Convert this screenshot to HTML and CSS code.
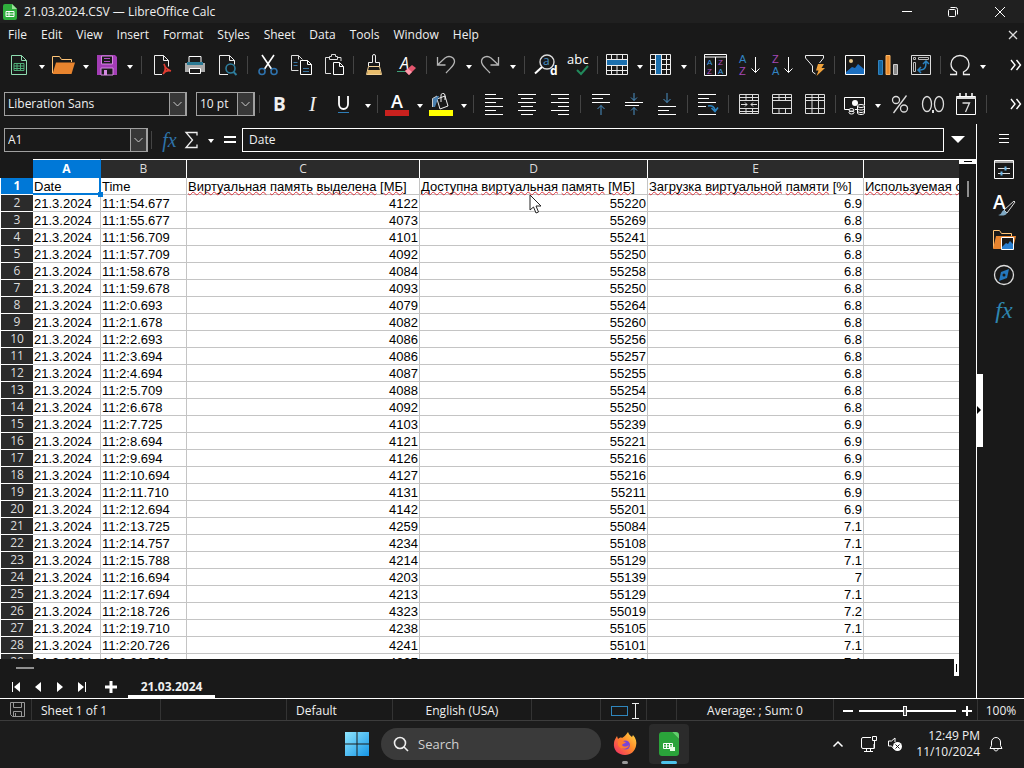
FILE: index.html
```html
<!DOCTYPE html>
<html lang="en">
<head>
    <meta charset="UTF-8">
    <meta name="viewport" content="width=device-width, initial-scale=1.0">
    <title>21.03.2024.CSV — LibreOffice Calc</title>
    <link rel="stylesheet" href="styles.css">
</head>
<body>
    <header class="titlebar">
        <svg class="app-icon" width="16" height="18" viewBox="0 0 16 18"><path d="M3 1h7l5 5v9a2 2 0 0 1-2 2H3a2 2 0 0 1-2-2V3a2 2 0 0 1 2-2z" fill="#2fae3c"/><path d="M10 1l5 5h-5z" fill="#9be29a"/><path d="M4 8.5h8v5H4zM4 11h8M7 8.5v5" stroke="#fff" fill="none"/></svg>
        <span class="title-text">21.03.2024.CSV — LibreOffice Calc</span>
        <div class="window-buttons">
            <button aria-label="Minimize"><svg width="12" height="12" viewBox="0 0 12 12"><path d="M1 5.500h10" stroke="#fff"/></svg></button>
            <button aria-label="Restore"><svg width="12" height="12" viewBox="0 0 12 12" fill="none" stroke="#fff"><rect x="1.500" y="3.500" width="7" height="7" rx="1"/><path d="M3.500 1.500h5a2 2 0 0 1 2 2v5"/></svg></button>
            <button aria-label="Close"><svg width="12" height="12" viewBox="0 0 12 12"><path d="M1 1l10 10M11 1L1 11" stroke="#fff"/></svg></button>
        </div>
    </header>

    <nav class="menubar">
        <button>File</button>
        <button>Edit</button>
        <button>View</button>
        <button>Insert</button>
        <button>Format</button>
        <button>Styles</button>
        <button>Sheet</button>
        <button>Data</button>
        <button>Tools</button>
        <button>Window</button>
        <button>Help</button>
        <button class="close-doc" aria-label="Close document"><svg width="10" height="10" viewBox="0 0 10 10"><path d="M1 1l8 8M9 1L1 9" stroke="#ddd" stroke-width="1.300"/></svg></button>
    </nav>

    <!-- Standard toolbar -->
    <div class="toolbar toolbar-standard">
        <button class="tool split" aria-label="New"><svg class="icon" viewBox="0 0 24 24" fill="none"><path d="M4.500 2.500h10l5 5v14h-15zM14.500 2.500v5h5" stroke="#8fdcb0"/><path d="M7 10.500h10v7H7zM7 13h10M7 15.500h10M10 10.500v7M13.500 10.500v7" stroke="#4fae78"/></svg></button>
        <button class="tool split" aria-label="Open"><svg class="icon" viewBox="0 0 24 24"><path d="M1.500 20V3.500h7l2 3h10V9" fill="none" stroke="#ffc477"/><path d="M5 9.500h19L20.500 21H1.500z" fill="#e8842e"/></svg></button>
        <button class="tool split" aria-label="Save"><svg class="icon" viewBox="0 0 24 24"><path d="M2 2h18l2 2v18H2z" fill="#a33db5"/><path d="M6.500 3v8h11V3z" fill="#1a1a1a" stroke="#d68be2"/><path d="M9 5.500h6M9 8.500h6" stroke="#b04cc1"/><path d="M6 22v-7h12v7z" fill="#1a1a1a" stroke="#d68be2"/><path d="M9 17h3v5H9z" fill="#d68be2"/></svg></button>
        <span class="sep"></span>
        <button class="tool" aria-label="Export as PDF"><svg class="icon" viewBox="0 0 24 24" fill="none"><path d="M12 21.500H4.500v-19h9l5 5v6M13.500 2.500v5h5" stroke="#eee"/><path d="M14 11c1 4 4 6 7 7-3-1-6 0-8 3 2-2 3-6 1-10z" stroke="#e03c31" stroke-width="1.600"/></svg></button>
        <button class="tool" aria-label="Print"><svg class="icon" viewBox="0 0 24 24"><path d="M6 9V3.500h12V9" fill="#1a1a1a" stroke="#fff"/><path d="M2 10h20v9H2z" fill="#aaa"/><path d="M4 9h16v3H4z" fill="#2b7a94"/><path d="M6.500 15.500h11v5h-11z" fill="#1a1a1a" stroke="#fff"/></svg></button>
        <button class="tool" aria-label="Print preview"><svg class="icon" viewBox="0 0 24 24" fill="none"><path d="M12 21.500H3.500v-19h10l5 5v4M13.500 2.500v5h5" stroke="#eee"/><circle cx="14.500" cy="15.500" r="4.500" stroke="#2e7e9e" stroke-width="1.600"/><path d="M17.500 19l3 3" stroke="#2e7e9e" stroke-width="2"/></svg></button>
        <span class="sep"></span>
        <button class="tool" aria-label="Cut"><svg class="icon" viewBox="0 0 24 24" fill="none"><path d="M6 2l9.500 14M18 2L8.500 16" stroke="#fff" stroke-width="1.600"/><circle cx="6" cy="18.500" r="3" stroke="#2e72ad" stroke-width="1.600"/><circle cx="18" cy="18.500" r="3" stroke="#2e72ad" stroke-width="1.600"/></svg></button>
        <button class="tool" aria-label="Copy"><svg class="icon" viewBox="0 0 24 24" fill="none"><path d="M9.500 17.500h-7v-15h7l4 4M9.500 2.500v4" stroke="#ddd"/><path d="M11.500 7.500h7l4 4v10h-11zM18.500 7.500v4h4" stroke="#fff"/><path d="M4.500 9.500h4M4.500 12.500h4M14 15.500h6M14 18.500h6" stroke="#3b78a5"/></svg></button>
        <button class="tool" aria-label="Paste"><svg class="icon" viewBox="0 0 24 24" fill="none"><path d="M9 20.500H3.500v-16h4M15 4.500h4V8M7.500 3.500h2v-2h4v2h2v3h-8z" stroke="#ddd"/><path d="M11.500 9.500h6l4 4v8h-10zM17.500 9.500v4h4" stroke="#fff"/></svg></button>
        <span class="sep"></span>
        <button class="tool" aria-label="Clone formatting"><svg class="icon" viewBox="0 0 24 24" fill="none"><path d="M10.500 9.500V3a1.500 1.500 0 0 1 3 0v6.500h4v4h-11v-4z" stroke="#eee"/><path d="M6.500 13.500l-2 8h15l-2-8z" stroke="#f3d196" fill="#1a1a1a"/><path d="M6 17h12l1 4H5z" fill="#e9bd6c"/></svg></button>
        <button class="tool" aria-label="Clear formatting"><svg class="icon" viewBox="0 0 24 24"><text x="5" y="16" class="glyph" font-size="16" font-style="italic" fill="#fff">A</text><path d="M2 18.500h9" stroke="#3fa37a"/><path d="M10 18l7-6 4 3-7 7z" fill="#e4566e"/><path d="M10 18l3-2.500 4 3.500-3 3z" fill="#ff9aab"/></svg></button>
        <span class="sep"></span>
        <button class="tool split" aria-label="Undo"><svg class="icon" viewBox="0 0 24 24" fill="none" stroke="#b5b5b5" stroke-width="1.300"><path d="M3.500 4v8h8M4 11.500l7-6.500c4-3 9-1 9.500 3 .5 4-3 6-8.500 12"/></svg></button>
        <button class="tool split" aria-label="Redo"><svg class="icon" viewBox="0 0 24 24" fill="none" stroke="#b5b5b5" stroke-width="1.300"><path d="M20.500 4v8h-8M20 11.500L13 5C9 2 4 4 3.500 8c-.5 4 3 6 8.500 12"/></svg></button>
        <span class="sep"></span>
        <button class="tool" aria-label="Find and replace"><svg class="icon" viewBox="0 0 24 24" fill="none"><circle cx="14" cy="9" r="7" stroke="#ddd" stroke-width="1.400"/><path d="M9 14l-7 6.500" stroke="#fff" stroke-width="2"/><text x="10" y="12" class="glyph" font-size="12" fill="#4a90c4">a</text><text x="17" y="22" class="glyph" font-size="12" font-weight="bold" fill="#fff">d</text></svg></button>
        <button class="tool" aria-label="Spelling"><svg class="icon" viewBox="0 0 24 24" fill="none"><text x="1" y="11" class="glyph" font-size="13" fill="#fff">abc</text><path d="M11 17l4 4 7-8" stroke="#218a5c" stroke-width="2"/></svg></button>
        <span class="sep"></span>
        <button class="tool split" aria-label="Row"><svg class="icon" viewBox="0 0 24 24" fill="none"><path d="M2 7h20v5H2z" fill="#1b6fae"/><path d="M1.500 1.500h21v20h-21zM1.500 6.500h21M1.500 12.500h21M1.500 17.500h21M6.500 1.500v5M12 1.500v5M17.500 1.500v5M6.500 12v10M12 12v10M17.500 12v10" stroke="#eee"/></svg></button>
        <button class="tool split" aria-label="Column"><svg class="icon" viewBox="0 0 24 24" fill="none"><path d="M7 2h6v20H7z" fill="#1b6fae"/><path d="M1.500 1.500h20v20h-20zM6.500 1.500v20M12.500 1.500v20M17.500 1.500v20M1.500 6.500h5M1.500 11.500h5M1.500 16.500h5M12 6.500h9M12 11.500h9M12 16.500h9" stroke="#eee"/></svg></button>
        <span class="sep"></span>
        <button class="tool" aria-label="Sort"><svg class="icon" viewBox="0 0 24 24" fill="none"><path d="M.5 1.500h22v21H.5zM.5 4h22M11.500 4v18" stroke="#fff"/><g class="letters" font-size="8"><text x="3" y="12" fill="#3b9be0">A</text><text x="3" y="21" fill="#b04cc1">Z</text><text x="14" y="12" fill="#b04cc1">Z</text><text x="14" y="21" fill="#3b9be0">A</text></g></svg></button>
        <button class="tool" aria-label="Sort ascending"><svg class="icon" viewBox="0 0 24 24" fill="none"><g class="letters" font-size="11"><text x="2" y="10" fill="#3184c4">A</text><text x="2" y="22" fill="#a548b5">Z</text></g><path d="M18.500 4v15.500M14.500 15.500l4 4 4-4" stroke="#fff"/></svg></button>
        <button class="tool" aria-label="Sort descending"><svg class="icon" viewBox="0 0 24 24" fill="none"><g class="letters" font-size="11"><text x="2" y="10" fill="#a548b5">Z</text><text x="2" y="22" fill="#3184c4">A</text></g><path d="M18.500 4v15.500M14.500 15.500l4 4 4-4" stroke="#fff"/></svg></button>
        <button class="tool" aria-label="AutoFilter"><svg class="icon" viewBox="0 0 24 24" fill="none"><path d="M12.500 21l-3-2v-6l-7-8V2.500h18V5l-4 5" stroke="#eee"/><path d="M15 11h6l-2.500 4H22l-8.500 8 2-5.500H13z" fill="#f0a23b"/></svg></button>
        <span class="sep"></span>
        <button class="tool" aria-label="Image"><svg class="icon" viewBox="0 0 24 24"><path d="M2.500 2.500h19v19h-19z" fill="none" stroke="#fff"/><circle cx="8" cy="8" r="2" fill="#e8c88a"/><path d="M3 19l6-5 3 1 3-4 6 5v5H3z" fill="#1c6fc0"/></svg></button>
        <button class="tool" aria-label="Chart"><svg class="icon" viewBox="0 0 24 24"><path d="M2.500 7.500h4v14h-4z" fill="#15659f" stroke="#2f83c0"/><path d="M10 2.500h4v19h-4z" fill="#e88b2e" stroke="#ffb765"/><path d="M17.500 11.500h4v10h-4z" fill="#8a8a8a" stroke="#ccc"/></svg></button>
        <button class="tool" aria-label="Pivot table"><svg class="icon" viewBox="0 0 24 24" fill="none"><path d="M2.500 2.500h19v19h-19z" stroke="#ddd"/><path d="M4.500 4.500h2v2h-2zM9.500 4.500h10v2h-10zM4.500 9.500h2v9h-2z" stroke="#bbb"/><path d="M9 17c7 0 8-2 8-8M14 11l3-3 3 3M12 14l-3 3 3 3" stroke="#2b82bf" stroke-width="1.500"/></svg></button>
        <span class="sep"></span>
        <button class="tool split" aria-label="Special character"><svg class="icon" viewBox="0 0 24 24" fill="none"><path d="M2 21.500h6.500v-2.500C4.500 17 3 14 3 11a9 8.500 0 0 1 18 0c0 3-1.500 6-5.500 8v2.500H22" stroke="#eee" stroke-width="1.300"/></svg></button>
        <button class="more" aria-label="More">
            <svg width="12" height="12" viewBox="0 0 12 12" fill="none" stroke="#fff" stroke-width="1.400"><path d="M1 1l4 5-4 5M6.500 1l4 5-4 5"/></svg>
        </button>
    </div>

    <!-- Formatting toolbar -->
    <div class="toolbar toolbar-format">
        <select class="combo combo-font" aria-label="Font name"><option>Liberation Sans</option></select>
        <select class="combo combo-size" aria-label="Font size"><option>10 pt</option></select>
        <span class="sep"></span>
        <button class="tool letter bold" aria-label="Bold">B</button>
        <button class="tool letter italic" aria-label="Italic">I</button>
        <button class="tool split" aria-label="Underline"><svg class="icon" viewBox="0 0 24 24" fill="none"><path d="M6 4v8a4.500 5 0 0 0 9 0V4" stroke="#fff" stroke-width="1.800"/><path d="M5 20.500h11" stroke="#2e7eb8"/></svg></button>
        <span class="sep"></span>
        <button class="tool split" aria-label="Font color"><svg class="icon" viewBox="0 0 24 24"><text x="12" y="16" text-anchor="middle" class="glyph" font-size="18" font-weight="600" fill="#fff">A</text><path d="M0 18h24v6H0z" fill="#c9211e"/></svg></button>
        <button class="tool split" aria-label="Background color"><svg class="icon" viewBox="0 0 24 24" fill="none"><path d="M8 7l8-3 3 10-8 3zM12 10V4a2 2 0 0 1 4-1v5" stroke="#eee"/><path d="M3 15V7l5-3h2L6 15z" fill="#4a7fae"/><path d="M3.500 15V6.500L8 4" stroke="#ccc"/><path d="M0 18h24v6H0z" fill="#ff0"/></svg></button>
        <span class="sep"></span>
        <button class="tool" aria-label="Align left"><svg class="icon" viewBox="0 0 24 24"><path d="M3 2.500h11M3 6.500h18M3 10.500h11M3 14.500h18M3 18.500h11M3 22.500h18" stroke="#fff"/></svg></button>
        <button class="tool" aria-label="Center"><svg class="icon" viewBox="0 0 24 24"><path d="M3 2.500h18M6 6.500h12M3 10.500h18M6 14.500h12M3 18.500h18M6 22.500h12" stroke="#fff"/></svg></button>
        <button class="tool" aria-label="Align right"><svg class="icon" viewBox="0 0 24 24"><path d="M3 2.500h18M10 6.500h11M3 10.500h18M10 14.500h11M3 18.500h18M10 22.500h11" stroke="#fff"/></svg></button>
        <span class="sep"></span>
        <button class="tool" aria-label="Align top"><svg class="icon" viewBox="0 0 24 24" fill="none"><path d="M3 2.500h18M3 6.500h11M3 10.500h18" stroke="#fff"/><path d="M12 23V13.500M8.500 17l3.500-3.500 3.500 3.500" stroke="#4a90c4"/></svg></button>
        <button class="tool" aria-label="Center vertically"><svg class="icon" viewBox="0 0 24 24" fill="none"><path d="M3 10.500h18M3 13.500h14" stroke="#fff"/><path d="M12 1v7.500M9 5.500l3 3 3-3M12 23v-7.500M9 18.500l3-3 3 3" stroke="#4a90c4"/></svg></button>
        <button class="tool" aria-label="Align bottom"><svg class="icon" viewBox="0 0 24 24" fill="none"><path d="M3 14.500h18M3 18.500h11M3 22.500h18" stroke="#fff"/><path d="M12 1v9.500M8.500 7l3.500 3.500L15.500 7" stroke="#4a90c4"/></svg></button>
        <span class="sep"></span>
        <button class="tool" aria-label="Wrap text"><svg class="icon" viewBox="0 0 24 24" fill="none"><path d="M2 2.500h18M2 6.500h11M2 10.500h18M2 14.500h8M2 22.500h18" stroke="#fff"/><path d="M12 14c4-1 7 1 7 5M15.500 16l3.500 3.500 3-4" stroke="#2b82bf" stroke-width="1.600"/></svg></button>
        <span class="sep"></span>
        <button class="tool" aria-label="Merge and center"><svg class="icon" viewBox="0 0 24 24" fill="none" stroke="#ddd"><path d="M2.500 2.500h19v19h-19zM2.500 5.500h19M2.500 8.500h19M2.500 16.500h19M2.500 19.500h19M9 2.500v6M15.500 2.500v6M9 16.500v5M15.500 16.500v5M4 12.500h6M14 12.500h6M8 10.500l2 2-2 2M16 10.500l-2 2 2 2"/></svg></button>
        <button class="tool" aria-label="Merge cells"><svg class="icon" viewBox="0 0 24 24" fill="none" stroke="#ddd"><path d="M2.500 2.500h19v19h-19zM2.500 5.500h19M2.500 8.500h19M2.500 16.500h19M9 2.500v6M15.500 2.500v6M9 16.500v5M15.500 16.500v5"/></svg></button>
        <button class="tool" aria-label="Unmerge cells"><svg class="icon" viewBox="0 0 24 24" fill="none" stroke="#ddd"><path d="M2.500 2.500h19v19h-19zM2.500 5.500h19M2.500 8.500h19M2.500 16.500h19M9 2.500v19M15.500 2.500v19"/></svg></button>
        <span class="sep"></span>
        <button class="tool split" aria-label="Currency"><svg class="icon" viewBox="0 0 24 24"><path d="M1.500 5.500h20v12h-20z" fill="none" stroke="#fff"/><circle cx="12" cy="11" r="3" fill="#fff"/><path d="M6 15h6v7H6zM14 13h8v9h-8z" fill="#1a1a1a"/><g fill="none" stroke="#fff"><ellipse cx="8.500" cy="18" rx="2.500" ry="1.500"/><ellipse cx="8.500" cy="20.500" rx="2.500" ry="1.500"/><ellipse cx="18" cy="14" rx="3.500" ry="1.500"/><path d="M14.500 14v7c0 2 7 2 7 0v-7M14.500 16.500c0 2 7 2 7 0M14.500 19c0 2 7 2 7 0"/></g></svg></button>
        <button class="tool" aria-label="Percent"><svg class="icon" viewBox="0 0 24 24" fill="none" stroke="#ddd" stroke-width="1.300"><circle cx="8" cy="8" r="3.500"/><circle cx="16" cy="16.500" r="3.500"/><path d="M18.500 3.500L5.500 21"/></svg></button>
        <button class="tool" aria-label="Number"><svg class="icon" viewBox="0 0 24 24" fill="none" stroke="#ddd" stroke-width="1.300"><ellipse cx="6" cy="12" rx="4.500" ry="7.500"/><ellipse cx="18" cy="12" rx="4.500" ry="7.500"/><path d="M12 18v3" stroke-width="2"/></svg></button>
        <button class="tool" aria-label="Date"><svg class="icon" viewBox="0 0 24 24" fill="none"><path d="M2.500 4.500h19v18h-19z" stroke="#fff"/><path d="M2 6h20" stroke="#ddd" stroke-width="2"/><path d="M6 1v4M12 1v4M18 1v4" stroke="#fff" stroke-width="1.500"/><path d="M8.500 11h7l-4 9" stroke="#ddd" stroke-width="1.300"/></svg></button>
        <span class="sep"></span>
        <button class="more" aria-label="More">
            <svg width="12" height="12" viewBox="0 0 12 12" fill="none" stroke="#fff" stroke-width="1.400"><path d="M1 1l4 5-4 5M6.500 1l4 5-4 5"/></svg>
        </button>
    </div>

    <main class="workspace">
        <section class="document">
            <div class="formula-bar">
                <select class="combo combo-name" aria-label="Name box"><option>A1</option></select>
                <span class="sep"></span>
                <button class="fx" aria-label="Function wizard">fx</button>
                <button class="sum" aria-label="Select function"><svg width="16" height="18" viewBox="0 0 16 18" fill="none"><path d="M13 4.500V1.500H2l6.500 7.500L2 16.500h11v-3" stroke="#eee" stroke-width="1.300"/></svg></button>
                <button class="equals" aria-label="Formula"><svg width="14" height="10" viewBox="0 0 14 10"><path d="M1 2h12M1 7h12" stroke="#fff" stroke-width="2"/></svg></button>
                <input class="formula-input" type="text" value="Date" aria-label="Input line">
                <button class="expand" aria-label="Expand formula bar"><svg width="14" height="8" viewBox="0 0 14 8"><path d="M0 0h14L7 7z" fill="#fff"/></svg></button>
            </div>

            <div class="sheet-area">
                <div class="sheet">
                    <table class="grid">
                        <colgroup>
                            <col class="col-head"><col class="col-a"><col class="col-b"><col class="col-c"><col class="col-d"><col class="col-e"><col>
                        </colgroup>
                        <thead>
                            <tr><td class="corner"></td><th class="current">A</th><th>B</th><th>C</th><th>D</th><th>E</th><th></th></tr>
                        </thead>
                        <tbody id="rows">
                            <tr class="labels">
                                <th class="current">1</th>
                                <td class="cursor-cell">Date</td>
                                <td>Time</td>
                                <td><u>Виртуальная</u> <u>память</u> <u>выделена</u> [<u>МБ</u>]</td>
                                <td><u>Доступна</u> <u>виртуальная</u> <u>память</u> [<u>МБ</u>]</td>
                                <td><u>Загрузка</u> <u>виртуальной</u> <u>памяти</u> [%]</td>
                                <td><u>Используемая</u> <u>оп</u></td>
                            </tr>
                        </tbody>
                    </table>
                    <svg class="pointer" width="13" height="20" viewBox="0 0 13 20"><path d="M1 1v15l3.500-3 2.500 6 2.500-1-2.500-6H12z" fill="#fff" stroke="#222"/></svg>
                </div>
                <div class="vscroll"><span class="split-handle"></span><span class="thumb"></span></div>
            </div>

            <div class="hscroll"><span class="thumb"></span><span class="split-handle"></span></div>

            <div class="sheet-tabs">
                <button aria-label="First sheet"><svg width="10" height="12" viewBox="0 0 10 12"><path d="M1.500 1v10" stroke="#fff"/><path d="M9 1v10L3 6z" fill="#fff"/></svg></button>
                <button aria-label="Previous sheet"><svg width="10" height="12" viewBox="0 0 10 12"><path d="M8 1v10L2 6z" fill="#fff"/></svg></button>
                <button aria-label="Next sheet"><svg width="10" height="12" viewBox="0 0 10 12"><path d="M2 1v10l6-5z" fill="#fff"/></svg></button>
                <button aria-label="Last sheet"><svg width="10" height="12" viewBox="0 0 10 12"><path d="M8.500 1v10" stroke="#fff"/><path d="M1 1v10l6-5z" fill="#fff"/></svg></button>
                <button class="add-sheet" aria-label="Add sheet"><svg width="14" height="14" viewBox="0 0 14 14"><path d="M7 1v12M1 7h12" stroke="#fff" stroke-width="3"/></svg></button>
                <button class="tab">21.03.2024</button>
            </div>
        </section>

        <aside class="sidebar">
            <span class="sidebar-handle"></span>
            <button aria-label="Sidebar settings"><svg class="icon" viewBox="0 0 24 24"><path d="M7 8.500h10M7 12.500h10M7 16.500h10" stroke="#fff"/></svg></button>
            <button aria-label="Properties"><svg class="icon" viewBox="0 0 24 24" fill="none"><path d="M2.500 2.500h19v18h-19z" stroke="#fff"/><path d="M3 4h18" stroke="#aaa" stroke-width="2"/><path d="M6 10.500h12M6 15.500h12" stroke="#ddd"/><path d="M13.500 8.500v4M9.500 13.500v4" stroke="#6bb6e8" stroke-width="2"/></svg></button>
            <button aria-label="Styles"><svg class="icon" viewBox="0 0 24 24" fill="none"><text x="1" y="16" class="glyph" font-size="19" font-weight="600" fill="#fff">A</text><path d="M12 17L22 8l1 1-8 11z" fill="#1a1a1a" stroke="#ddd"/><path d="M6 22c4 0 3-4 6-5l3 3c-1 3-6 3-9 2z" fill="#7fa9c4"/></svg></button>
            <button aria-label="Gallery"><svg class="icon" viewBox="0 0 24 24"><path d="M1.500 20V2.500h6l2 3h10V8" fill="none" stroke="#ffc477"/><path d="M4 8h20l-3 13H1z" fill="#e8842e"/><path d="M9.500 9.500h12v12h-12z" fill="#1a1a1a" stroke="#fff"/><path d="M10 19l4-4 2 1 2-3 3 3v5H10z" fill="#2a7fd0"/></svg></button>
            <button aria-label="Navigator"><svg class="icon" viewBox="0 0 24 24" fill="none"><circle cx="12" cy="12" r="9.500" stroke="#ddd" stroke-width="1.300"/><path d="M9 9l8-3-2 9-8 3z" fill="#2477bd"/><circle cx="12" cy="12" r="1.500" fill="#1a1a1a"/></svg></button>
            <button class="fx" aria-label="Functions">fx</button>
        </aside>
    </main>

    <footer class="statusbar">
        <span class="st-save"><svg width="17" height="17" viewBox="0 0 17 17" fill="none" stroke="#999"><path d="M1.500 .5h14v14h-12l-2-2zM4.500 .5v5h8v-5M4.500 14.500v-5h8v5M6.500 11v3"/></svg></span>
        <span class="st-sheet">Sheet 1 of 1</span>
        <span class="st-empty"></span>
        <span class="st-style">Default</span>
        <span class="st-lang">English (USA)</span>
        <span class="st-insert"></span>
        <span class="st-mode"><svg width="30" height="18" viewBox="0 0 30 18" fill="none"><rect x="1.500" y="4.500" width="16" height="9" stroke="#2f86bd"/><path d="M22 1.500h7M25.500 1.500v15M22 16.500h7" stroke="#eee"/></svg></span>
        <span class="st-sign"></span>
        <span class="st-stats">Average: ; Sum: 0</span>
        <span class="st-zoom">
            <button aria-label="Zoom out"><svg width="10" height="10" viewBox="0 0 10 10"><path d="M0 5h10" stroke="#fff" stroke-width="2"/></svg></button>
            <input type="range" min="0" max="100" value="48" aria-label="Zoom">
            <button aria-label="Zoom in"><svg width="10" height="10" viewBox="0 0 10 10"><path d="M0 5h10M5 0v10" stroke="#fff" stroke-width="2"/></svg></button>
        </span>
        <span class="st-percent">100%</span>
    </footer>

    <div class="taskbar">
        <div class="task-center">
            <button class="task" aria-label="Start"><svg width="24" height="24" viewBox="0 0 24 24"><defs><linearGradient id="win" x1="0" y1="0" x2="1" y2="1"><stop offset="0" stop-color="#8fe6ff"/><stop offset="1" stop-color="#1595e6"/></linearGradient></defs><path d="M0 0h11.500v11.500H0zM12.500 0H24v11.500H12.500zM0 12.500h11.500V24H0zM12.500 12.500H24V24H12.500z" fill="url(#win)"/></svg></button>
            <label class="search">
                <svg width="16" height="16" viewBox="0 0 16 16" fill="none" stroke="#eee" stroke-width="1.600"><circle cx="7" cy="7" r="5.500"/><path d="M11 11l4 4"/></svg>
                <input type="text" placeholder="Search" aria-label="Search">
            </label>
            <button class="task running" aria-label="Firefox"><svg width="24" height="24" viewBox="0 0 24 24"><defs><linearGradient id="fox" x1="1" y1="0" x2="0" y2="1"><stop offset="0" stop-color="#ffe14a"/><stop offset=".45" stop-color="#ff8a2a"/><stop offset="1" stop-color="#f0246b"/></linearGradient></defs><path d="M15 0c1 3 3 4 4 5l1-2c3 3 4 7 3 11-1 5-5 9-11 9C5 23 0 18 1 11c0-3 2-5 3-7l1 3c1-1 3-2 4-1 2-1 4-3 6-6z" fill="url(#fox)"/><circle cx="12.500" cy="13" r="4.500" fill="#7a44d8"/><path d="M5 9c3-2 5 1 8 1-1 2-3 1-4 3 2 3 6 1 7 0-1 5-9 5-11 0z" fill="#ff7a2e"/></svg></button>
            <button class="task running active" aria-label="LibreOffice Calc"><svg width="22" height="26" viewBox="0 0 22 26"><path d="M4 1h10l7 7v14a3 3 0 0 1-3 3H4a3 3 0 0 1-3-3V4a3 3 0 0 1 3-3z" fill="#2aa33a"/><path d="M14 1l7 7V4a3 3 0 0 0-3-3z" fill="#5fd06a"/><path d="M5.500 12.500h9v5h-9zM5.500 15h9M8.500 12.500v5M11.500 12.500v5" fill="none" stroke="#fff"/><path d="M12 16h5v4h-5z" fill="#e4ffe4"/></svg></button>
        </div>
        <div class="tray">
            <button aria-label="Show hidden icons"><svg width="12" height="8" viewBox="0 0 12 8"><path d="M1.500 6.500L6 2l4.500 4.500" fill="none" stroke="#fff" stroke-width="1.500"/></svg></button>
            <button aria-label="Network"><svg width="18" height="18" viewBox="0 0 18 18" fill="none" stroke="#fff"><path d="M11 2.500H3a1.500 1.500 0 0 0-1.500 1.500v8A1.500 1.500 0 0 0 3 13.500h11V9M4 16.500h9M6.500 13.500v3M10.500 13.500v3M12.500 1.500h4v4h-4zM14.500 5.500v8"/></svg></button>
            <button aria-label="Volume"><svg width="16" height="16" viewBox="0 0 16 16"><path d="M8 2v4M8 2L4.500 5H1.500v5h3L7 13" fill="none" stroke="#fff"/><circle cx="10.500" cy="10.500" r="4.500" fill="#fff"/><path d="M8.500 8.500l4 4M12.500 8.500l-4 4" stroke="#1b1b1b"/></svg></button>
            <div class="clock"><span>12:49 PM</span><span>11/10/2024</span></div>
            <button aria-label="Notifications"><svg width="14" height="16" viewBox="0 0 14 16" fill="none" stroke="#fff"><path d="M7 1.500a4.500 4.500 0 0 0-4.500 4.500v3.500l-1.500 3h12l-1.500-3V6A4.500 4.500 0 0 0 7 1.500zM5 13c0 2.500 4 2.500 4 0"/></svg></button>
        </div>
    </div>

    <script src="script.js"></script>
</body>
</html>
```

FILE: styles.css
```css
:root {
    --bg: #191919;
    --title-bg: #202020;
    --head-bg: #2b2b2b;
    --text: #f0f0f0;
    --accent: #0078d7;
    --line: #3c3c3c;
    --row: 17px;
}

* {
    box-sizing: border-box;
}

body {
    margin: 0;
    height: 100vh;
    display: flex;
    flex-direction: column;
    overflow: hidden;
    background: var(--bg);
    color: var(--text);
    font-family: "Open Sans", "Noto Sans", sans-serif;
    font-size: 12px;
    line-height: 16px;
}

button {
    background: none;
    border: none;
    padding: 0;
    color: inherit;
    font: inherit;
    display: flex;
    align-items: center;
    justify-content: center;
}

svg {
    display: block;
    flex: none;
    overflow: visible;
}

.icon {
    width: 24px;
    height: 24px;
}

.glyph {
    font-family: "Open Sans", sans-serif;
}

.letters {
    font-family: "Liberation Sans", Arial, sans-serif;
}

/* Title and menu */
.titlebar {
    display: flex;
    align-items: center;
    height: 23px;
    padding-left: 2px;
    background: var(--title-bg);
}

.title-text {
    margin-left: 6px;
}

.window-buttons {
    display: flex;
    margin-left: auto;
}

.window-buttons button {
    width: 46px;
    height: 20px;
}

.window-buttons button:last-child {
    width: 48px;
}

.menubar {
    display: flex;
    align-items: center;
    gap: 14px;
    height: 23px;
    padding: 0 6px 0 8px;
}

.close-doc {
    margin-left: auto;
}

/* Toolbars */
.toolbar {
    display: flex;
    align-items: center;
    padding: 0 2px;
}

.toolbar-standard {
    height: 38px;
    padding-left: 3px;
}

.toolbar-format {
    height: 40px;
    padding-left: 4px;
}

.tool {
    flex: none;
    width: 33px;
    height: 28px;
}

.split {
    width: 44px;
    justify-content: flex-start;
    padding-left: 4px;
}

.split::after,
.sum::after {
    content: "";
    margin: 3px 0 0 8px;
    border: 3px solid transparent;
    border-top: 4px solid #fff;
    border-bottom: 0;
}

.sep {
    flex: none;
    width: 7px;
    height: 18px;
    background: linear-gradient(#444, #444) center / 1px 100% no-repeat;
}

.toolbar-standard .split + .sep {
    margin-left: 3px;
}

.toolbar-format .sep {
    width: 8px;
}

.more {
    margin-left: auto;
    width: 13px;
}

.letter {
    font-size: 19px;
}

.bold {
    font-weight: 700;
}

.italic {
    font-family: "Liberation Serif", serif;
    font-style: italic;
    font-size: 21px;
}

.combo {
    appearance: none;
    flex: none;
    height: 24px;
    padding: 0 3px;
    border: 1px solid #a0a0a0;
    border-radius: 0;
    color: var(--text);
    font: inherit;
    background-color: var(--bg);
    background-image: url("data:image/svg+xml,%3Csvg xmlns='http://www.w3.org/2000/svg' width='17' height='22'%3E%3Crect width='17' height='22' fill='%23383838'/%3E%3Cpath d='M.5 0v22M16.500 0v22' stroke='%23a0a0a0'/%3E%3Cpath d='M4.500 9l4 4 4-4' fill='none' stroke='%23ccc'/%3E%3C/svg%3E");
    background-position: right center;
    background-size: 17px 22px;
    background-repeat: no-repeat;
}

.combo-font {
    width: 183px;
    margin-right: 9px;
}

.combo-size {
    width: 59px;
}

.combo-name {
    width: 144px;
}

/* Workspace */
.workspace {
    display: flex;
    flex: 1;
    min-height: 0;
    border-bottom: 1px solid #fff;
}

.document {
    display: flex;
    flex-direction: column;
    flex: 1;
    min-width: 0;
}

.formula-bar {
    display: flex;
    align-items: center;
    height: 35px;
    padding: 0 11px 4px 4px;
}

.fx {
    font-family: "Liberation Serif", serif;
    font-style: italic;
    font-size: 20px;
    color: #2e72a8;
}

.formula-bar .fx {
    width: 29px;
}

.sum {
    width: 34px;
    justify-content: flex-start;
}

.equals {
    width: 24px;
}

.formula-input {
    flex: 1;
    min-width: 0;
    height: 24px;
    padding: 0 6px;
    background: var(--bg);
    border: 1px solid #fff;
    border-radius: 0;
    color: var(--text);
    font: inherit;
}

.expand {
    margin-left: 7px;
}

.sheet-area {
    display: flex;
    flex: 1;
    min-height: 0;
}

.sheet {
    position: relative;
    flex: 1;
    min-width: 0;
    overflow: hidden;
}

.grid {
    table-layout: fixed;
    width: 100%;
    border-collapse: separate;
    border-spacing: 0;
    font-family: "Liberation Sans", Arial, sans-serif;
    font-size: 13px;
    line-height: 14px;
    color: #000;
}

.col-head { width: 33px; }
.col-a { width: 68px; }
.col-b { width: 86px; }
.col-c { width: 233px; }
.col-d { width: 228px; }
.col-e { width: 216px; }

.grid th {
    padding: 0;
    background: var(--head-bg);
    border-right: 1px solid #fff;
    color: #ddd;
    font-family: "Open Sans", sans-serif;
    font-size: 12px;
    font-weight: 400;
    line-height: 16px;
    text-align: center;
}

.grid thead th {
    height: 19px;
    border-top: 1px solid #fff;
}

.grid tbody th {
    height: var(--row);
    border-right: 0;
    border-bottom: 1px solid #fff;
    border-left: 1px solid #fff;
}

.grid .current {
    background: var(--accent);
    border-right-color: var(--accent);
    color: #fff;
    font-weight: 700;
}

.grid td {
    height: var(--row);
    padding: 2px 1px 0;
    background: #fff;
    border-right: 1px solid #c4c4c4;
    border-bottom: 1px solid #c4c4c4;
    white-space: nowrap;
}

.grid th:last-child,
.grid td:last-child {
    border-right: 0;
}

.grid .corner {
    background: var(--bg);
    border: 0;
}

.grid .num {
    text-align: right;
}

/* the squiggle hangs over the cell border, so keep this row on top */
.labels td {
    position: relative;
    z-index: 1;
}

.grid u {
    text-decoration: underline wavy #d8323c 1px;
    text-decoration-skip-ink: none;
    text-underline-offset: 0;
}

/* selection frame is drawn inside the cell */
.grid .cursor-cell {
    z-index: 2;
    border-color: var(--accent);
    box-shadow: inset -1px -1px 0 var(--accent);
}

.cursor-cell::after {
    content: "";
    position: absolute;
    right: -3px;
    bottom: -3px;
    width: 5px;
    height: 5px;
    background: var(--accent);
}

.pointer {
    position: absolute;
    z-index: 3;
    left: 529px;
    top: 35px;
}

.vscroll {
    display: flex;
    flex-direction: column;
    align-items: center;
    width: 17px;
}

.vscroll .split-handle {
    width: 17px;
    height: 5px;
    background: linear-gradient(#000, #000) center / 8px 1px no-repeat #fff;
}

.vscroll .thumb {
    width: 2px;
    height: 16px;
    margin-top: 17px;
    background: #909090;
}

.hscroll {
    display: flex;
    align-items: center;
    justify-content: space-between;
    height: 17px;
    padding: 0 17px 0 16px;
}

.hscroll .thumb {
    width: 18px;
    height: 2px;
    background: #909090;
}

.hscroll .split-handle {
    width: 5px;
    height: 17px;
    background: linear-gradient(#000, #000) center / 1px 8px no-repeat #fff;
}

.sheet-tabs {
    display: flex;
    height: 22px;
    padding-left: 5px;
}

.sheet-tabs button {
    width: 22px;
}

.sheet-tabs .add-sheet {
    width: 35px;
}

.sheet-tabs .tab {
    width: 87px;
    padding-top: 2px;
    border-bottom: 3px solid #fff;
    font-weight: 700;
}

/* Sidebar */
.sidebar {
    position: relative;
    display: flex;
    flex-direction: column;
    align-items: center;
    width: 48px;
    padding-left: 7px;
    border-left: 1px solid #fff;
}

.sidebar button {
    height: 35px;
}

.sidebar button:first-of-type {
    height: 28px;
}

.sidebar .fx {
    font-size: 24px;
    color: #2e86b0;
}

.sidebar-handle {
    position: absolute;
    left: 0;
    top: 250px;
    width: 6px;
    height: 73px;
    background: #fff;
}

.sidebar-handle::after {
    content: "";
    position: absolute;
    top: 32px;
    border: 4px solid transparent;
    border-left-color: #000;
    border-right: 0;
}

/* Status bar */
.statusbar {
    display: flex;
    height: 22px;
    border-bottom: 1px solid var(--line);
}

.statusbar > span {
    display: flex;
    align-items: center;
    padding-top: 2px;
    border-right: 1px solid #333;
}

.statusbar .st-save { width: 32px; padding-left: 9px; }
.statusbar .st-sheet { width: 129px; padding-left: 9px; }
.statusbar .st-empty { width: 126px; }
.statusbar .st-style { width: 106px; padding-left: 9px; }
.statusbar .st-lang { width: 139px; justify-content: center; }
.statusbar .st-insert { width: 69px; }
.statusbar .st-mode { width: 46px; padding-left: 9px; }
.statusbar .st-sign { width: 30px; }
.statusbar .st-stats { flex: 1; justify-content: center; }
.statusbar .st-zoom { width: 144px; padding-left: 3px; gap: 6px; justify-content: center; }
.statusbar .st-percent { width: 46px; justify-content: center; border-right: 0; }

.st-zoom input {
    appearance: none;
    width: 97px;
    height: 12px;
    margin: 0;
    background: linear-gradient(#fff, #fff) center / 100% 2px no-repeat;
}

.st-zoom input::-webkit-slider-thumb {
    appearance: none;
    width: 4px;
    height: 10px;
    background: #555;
    border: 1px solid #fff;
}

/* Taskbar */
.taskbar {
    display: grid;
    grid-template-columns: 1fr auto 1fr;
    align-items: center;
    height: 47px;
    padding-bottom: 1px;
    background: #1c1c1c;
}

.task-center {
    grid-column: 2;
    display: flex;
    align-items: center;
    gap: 2px;
}

.task {
    position: relative;
    width: 44px;
    height: 40px;
    border-radius: 4px;
}

.task.active {
    width: 40px;
    background: #2b2b2b;
}

.running::after {
    content: "";
    position: absolute;
    bottom: 0;
    width: 6px;
    height: 3px;
    border-radius: 2px;
    background: #999;
}

.active::after {
    width: 16px;
    background: #4cc2ea;
}

.search {
    display: flex;
    align-items: center;
    gap: 9px;
    width: 220px;
    height: 32px;
    padding-left: 12px;
    border-radius: 16px;
    background: #3a3a3a;
}

.search input {
    width: 150px;
    padding: 0;
    background: none;
    border: 0;
    color: #ddd;
    font: inherit;
    font-size: 13px;
}

.search input::placeholder {
    color: #d0d0d0;
}

.tray {
    display: flex;
    align-items: center;
    justify-content: flex-end;
    gap: 9px;
    padding-right: 21px;
}

.tray button:first-child {
    margin-right: 7px;
}

.clock {
    display: flex;
    flex-direction: column;
    align-items: flex-end;
    margin-left: 4px;
}
```

FILE: script.js
```javascript
// time, allocated, available, load
const rows = [
    ['11:1:54.677', 4122, 55220, 6.9],
    ['11:1:55.677', 4073, 55269, 6.8],
    ['11:1:56.709', 4101, 55241, 6.9],
    ['11:1:57.709', 4092, 55250, 6.8],
    ['11:1:58.678', 4084, 55258, 6.8],
    ['11:1:59.678', 4093, 55250, 6.8],
    ['11:2:0.693', 4079, 55264, 6.8],
    ['11:2:1.678', 4082, 55260, 6.8],
    ['11:2:2.693', 4086, 55256, 6.8],
    ['11:2:3.694', 4086, 55257, 6.8],
    ['11:2:4.694', 4087, 55255, 6.8],
    ['11:2:5.709', 4088, 55254, 6.8],
    ['11:2:6.678', 4092, 55250, 6.8],
    ['11:2:7.725', 4103, 55239, 6.9],
    ['11:2:8.694', 4121, 55221, 6.9],
    ['11:2:9.694', 4126, 55216, 6.9],
    ['11:2:10.694', 4127, 55216, 6.9],
    ['11:2:11.710', 4131, 55211, 6.9],
    ['11:2:12.694', 4142, 55201, 6.9],
    ['11:2:13.725', 4259, 55084, 7.1],
    ['11:2:14.757', 4234, 55108, 7.1],
    ['11:2:15.788', 4214, 55129, 7.1],
    ['11:2:16.694', 4203, 55139, 7],
    ['11:2:17.694', 4213, 55129, 7.1],
    ['11:2:18.726', 4323, 55019, 7.2],
    ['11:2:19.710', 4238, 55105, 7.1],
    ['11:2:20.726', 4241, 55101, 7.1],
    ['11:2:21.710', 4237, 55106, 7.1]
];

const tbody = document.getElementById('rows');

rows.forEach(([time, used, free, load], i) => {
    const tr = document.createElement('tr');
    tr.innerHTML = `<th>${i + 2}</th><td>21.3.2024</td><td>${time}</td>
        <td class="num">${used}</td><td class="num">${free}</td><td class="num">${load}</td><td></td>`;
    tbody.appendChild(tr);
});
```
